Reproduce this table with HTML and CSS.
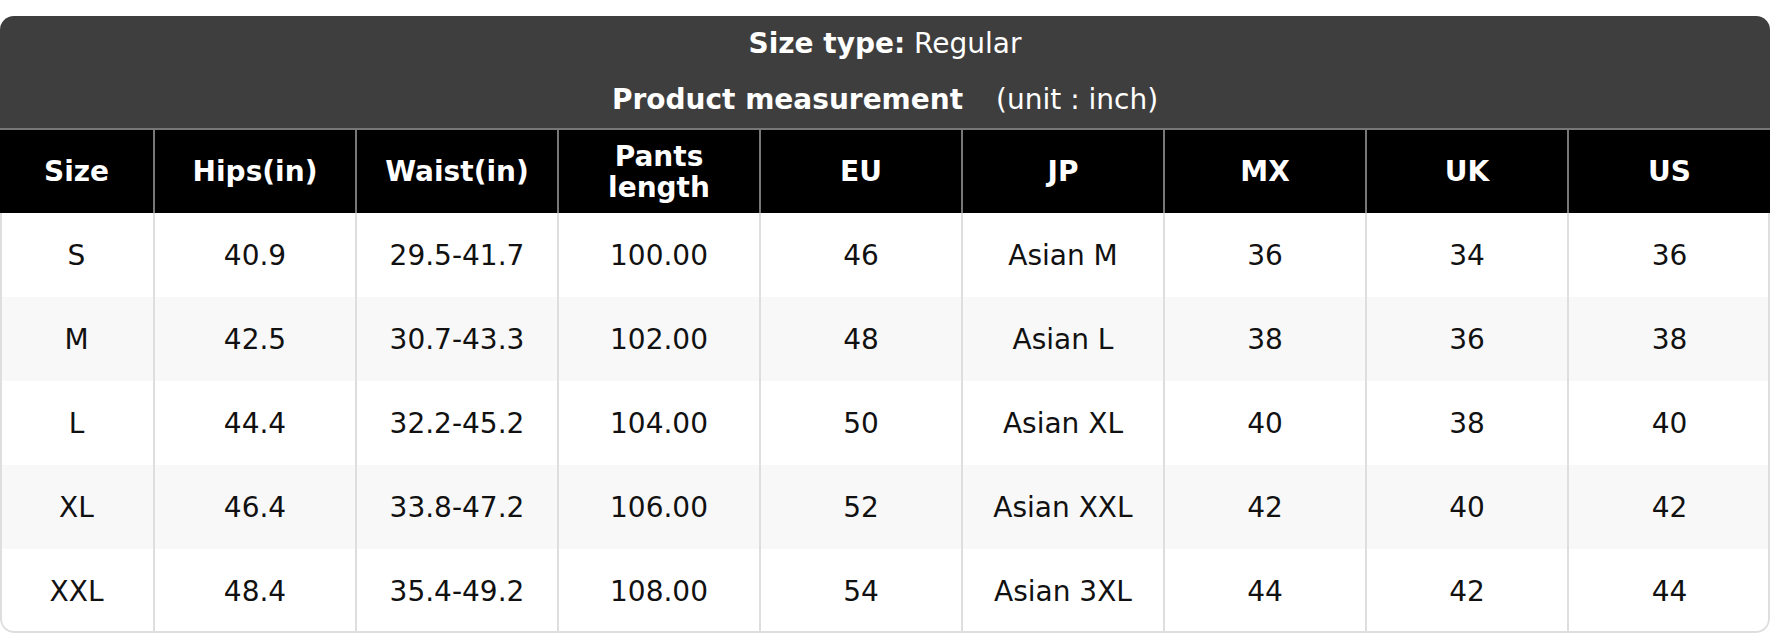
FILE: index.html
```html
<!DOCTYPE html>
<html lang="en">
<head>
<meta charset="utf-8">
<title>Size chart</title>
<link rel="stylesheet" href="styles.css">
</head>
<body>
<div class="card">
  <div class="title">
    <div class="title-line"><b>Size type:</b> Regular</div>
    <div class="title-line"><b>Product measurement</b><span class="unit">(unit : inch)</span></div>
  </div>
  <table class="chart">
    <colgroup>
      <col class="col-size">
      <col><col><col><col><col><col><col><col>
    </colgroup>
    <thead>
      <tr>
        <th>Size</th>
        <th>Hips(in)</th>
        <th>Waist(in)</th>
        <th>Pants<br>length</th>
        <th>EU</th>
        <th>JP</th>
        <th>MX</th>
        <th>UK</th>
        <th>US</th>
      </tr>
    </thead>
    <tbody>
      <tr><td>S</td><td>40.9</td><td>29.5-41.7</td><td>100.00</td><td>46</td><td>Asian M</td><td>36</td><td>34</td><td>36</td></tr>
      <tr><td>M</td><td>42.5</td><td>30.7-43.3</td><td>102.00</td><td>48</td><td>Asian L</td><td>38</td><td>36</td><td>38</td></tr>
      <tr><td>L</td><td>44.4</td><td>32.2-45.2</td><td>104.00</td><td>50</td><td>Asian XL</td><td>40</td><td>38</td><td>40</td></tr>
      <tr><td>XL</td><td>46.4</td><td>33.8-47.2</td><td>106.00</td><td>52</td><td>Asian XXL</td><td>42</td><td>40</td><td>42</td></tr>
      <tr><td>XXL</td><td>48.4</td><td>35.4-49.2</td><td>108.00</td><td>54</td><td>Asian 3XL</td><td>44</td><td>42</td><td>44</td></tr>
    </tbody>
  </table>
</div>
</body>
</html>
```

FILE: styles.css
```css
html, body {
  margin: 0;
  padding: 0;
  background: #ffffff;
}

body {
  padding-top: 16px;
  font-family: "DejaVu Sans", Verdana, sans-serif;
}

.card {
  position: relative;
  border-radius: 14px;
  overflow: hidden;
  background: #ffffff;
}

.card::after {
  content: "";
  position: absolute;
  left: 0;
  right: 0;
  top: 197px;
  bottom: 0;
  border: 2px solid #dedede;
  border-top: 0;
  border-radius: 0 0 14px 14px;
  pointer-events: none;
}

.title {
  background: #3e3e3e;
  color: #ffffff;
  text-align: center;
  font-size: 28px;
}

.title-line {
  line-height: 56px;
  height: 56px;
}

.title b {
  font-weight: bold;
}

.unit {
  margin-left: 33px;
}

.chart {
  width: 100%;
  border-collapse: collapse;
  table-layout: fixed;
  font-size: 28px;
}

.col-size {
  width: 154px;
}

.chart th {
  background: #000000;
  color: #ffffff;
  font-weight: bold;
  line-height: 31px;
  height: 83px;
  padding: 0;
  text-align: center;
  vertical-align: middle;
  border-top: 2px solid #777777;
  border-left: 2px solid #777777;
  border-right: 2px solid #777777;
}

.chart th:first-child {
  border-left: 0;
}

.chart th:last-child {
  border-right: 0;
}

.chart td {
  height: 84px;
  padding: 0;
  text-align: center;
  vertical-align: middle;
  color: #111111;
  border-left: 2px solid #dedede;
  border-right: 2px solid #dedede;
}

.chart td:first-child {
  border-left: 0;
}

.chart td:last-child {
  border-right: 0;
}

.chart tbody tr:nth-child(even) td {
  background: #f8f8f8;
}
```
